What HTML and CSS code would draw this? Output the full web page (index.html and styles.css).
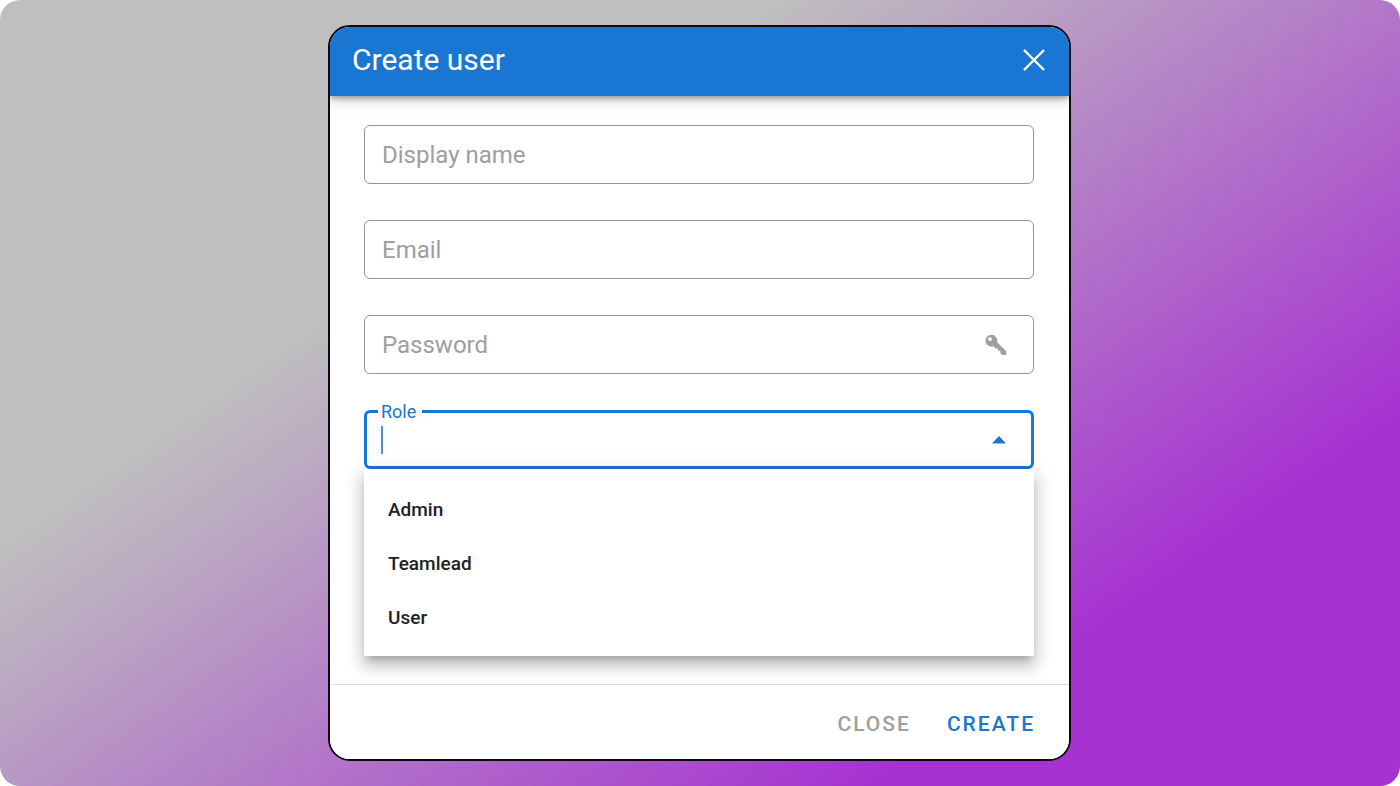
FILE: index.html
```html
<!DOCTYPE html>
<html lang="en">
<head>
<meta charset="utf-8">
<meta name="viewport" content="width=device-width, initial-scale=1">
<title>Create user</title>
<link rel="stylesheet" href="styles.css">
</head>
<body>
<main class="backdrop">
  <form class="dialog" role="dialog" aria-labelledby="dialog-title">
    <header class="dialog-header">
      <h1 class="dialog-title" id="dialog-title">Create user</h1>
      <button class="dismiss" type="button" aria-label="Dismiss">
        <svg viewBox="0 0 24 24" width="24" height="24" aria-hidden="true"><path d="M2 2 22 22M22 2 2 22" fill="none" stroke="currentColor" stroke-width="2.4"/></svg>
      </button>
    </header>
    <div class="dialog-body">
      <div class="field">
        <input class="control" id="name" type="text" placeholder=" ">
        <label class="label" for="name">Display name</label>
      </div>
      <div class="field">
        <input class="control" id="email" type="email" placeholder=" ">
        <label class="label" for="email">Email</label>
      </div>
      <div class="field">
        <input class="control" id="password" type="password" placeholder=" ">
        <label class="label" for="password">Password</label>
        <svg class="key" viewBox="0 0 22 22" width="22" height="22" aria-hidden="true"><path fill="currentColor" fill-rule="evenodd" d="M6.500 .800a5.900 5.900 0 1 0 2 11.400L10.800 14.500H13V16.700H15.300V19L17.500 21H21.200V17.200L12.100 8.300A5.900 5.900 0 0 0 6.500 .800ZM5 3.200a1.900 1.900 0 1 1 0 3.800 1.900 1.900 0 0 1 0-3.800Z"/></svg>
      </div>
      <div class="field field-active">
        <select class="control" id="role">
          <option value=""></option>
          <option>Admin</option>
          <option>Teamlead</option>
          <option>User</option>
        </select>
        <span class="caret"></span>
        <svg class="arrow" viewBox="0 0 14 8" width="14" height="8" aria-hidden="true"><path d="M0 7.500 7 0l7 7.500Z" fill="currentColor"/></svg>
        <label class="label-float" for="role">Role</label>
        <ul class="menu" role="listbox" aria-label="Role">
          <li class="option" role="option">Admin</li>
          <li class="option" role="option">Teamlead</li>
          <li class="option" role="option">User</li>
        </ul>
      </div>
    </div>
    <footer class="dialog-footer">
      <button class="action action-muted" type="button">CLOSE</button>
      <button class="action" type="submit">CREATE</button>
    </footer>
  </form>
</main>
</body>
</html>
```
FILE: styles.css
```css
* {
  box-sizing: border-box;
}

body {
  margin: 0;
  background: #fff;
  font-family: Roboto, "Liberation Sans", sans-serif;
}

button,
input,
select {
  font-family: inherit;
}

.backdrop {
  display: flex;
  justify-content: center;
  min-height: 100vh;
  padding: 25px 26px 25px 25px;
  border-radius: 20px;
  background: linear-gradient(145deg, #bfbfbf 31%, #a632d1 79%);
}

.dialog {
  display: flex;
  flex-direction: column;
  width: 100%;
  max-width: 743px;
  overflow: hidden;
  border: 2px solid #0b0b0b;
  border-radius: 22px;
  background: #fff;
}

.dialog-header {
  display: flex;
  align-items: center;
  justify-content: space-between;
  padding: 15px 23px 18px 22px;
  background: #1976d2;
  box-shadow: 0 2px 6px rgba(0, 0, 0, 0.35), 0 5px 14px rgba(0, 0, 0, 0.16);
  color: #fff;
}

.dialog-title {
  margin: 0;
  font-size: 30px;
  font-weight: 400;
  line-height: 36px;
}

.dismiss {
  display: flex;
  padding: 0;
  border: 0;
  background: none;
  color: inherit;
}

.dialog-body {
  display: flex;
  flex: 1;
  flex-direction: column;
  gap: 36px;
  padding: 29px 35px 28px 34px;
}

.field {
  display: grid;
  position: relative;
  align-items: center;
}

.field > * {
  grid-area: 1 / 1;
}

.control {
  width: 100%;
  height: 59px;
  padding: 0 16px;
  border: 1px solid #949494;
  border-radius: 6px;
  outline: 0;
  background: none;
  color: #212121;
  font-size: 24px;
  appearance: none;
}

.label {
  padding-left: 18px;
  color: #9e9e9e;
  font-size: 24px;
  line-height: 28px;
  pointer-events: none;
}

.control:not(:placeholder-shown) + .label {
  visibility: hidden;
}

.key {
  justify-self: end;
  margin-right: 27px;
  color: #9e9e9e;
  pointer-events: none;
}

.field-active .control {
  border: 3px solid #1976d2;
}

.caret {
  width: 2px;
  height: 28px;
  margin-left: 17px;
  background: #4a90da;
}

.arrow {
  justify-self: end;
  margin-right: 28px;
  color: #1976d2;
  pointer-events: none;
}

.label-float {
  position: absolute;
  top: -8px;
  left: 14px;
  padding: 0 6px 0 3px;
  background: #fff;
  color: #1976d2;
  font-size: 18px;
  line-height: 20px;
}

.menu {
  position: absolute;
  top: 100%;
  left: 0;
  width: 100%;
  margin: 0;
  padding: 14px 0 11px;
  background: #fff;
  box-shadow: 0 7px 7px -4px rgba(0, 0, 0, 0.2), 0 11px 14px 1px rgba(0, 0, 0, 0.14), 0 4px 19px 3px rgba(0, 0, 0, 0.12);
  list-style: none;
}

.option {
  padding: 0 24px;
  color: #212121;
  font-size: 19px;
  font-weight: 500;
  line-height: 54px;
}

.dialog-footer {
  display: flex;
  position: relative;
  justify-content: flex-end;
  gap: 36px;
  padding: 25px 34px 21px;
  border-top: 1px solid #dedede;
  background: #fff;
}

.action {
  padding: 0;
  border: 0;
  background: none;
  color: #1976d2;
  font-size: 21px;
  font-weight: 500;
  letter-spacing: 2px;
  line-height: 28px;
}

.action-muted {
  color: #9e9e9e;
}
```
